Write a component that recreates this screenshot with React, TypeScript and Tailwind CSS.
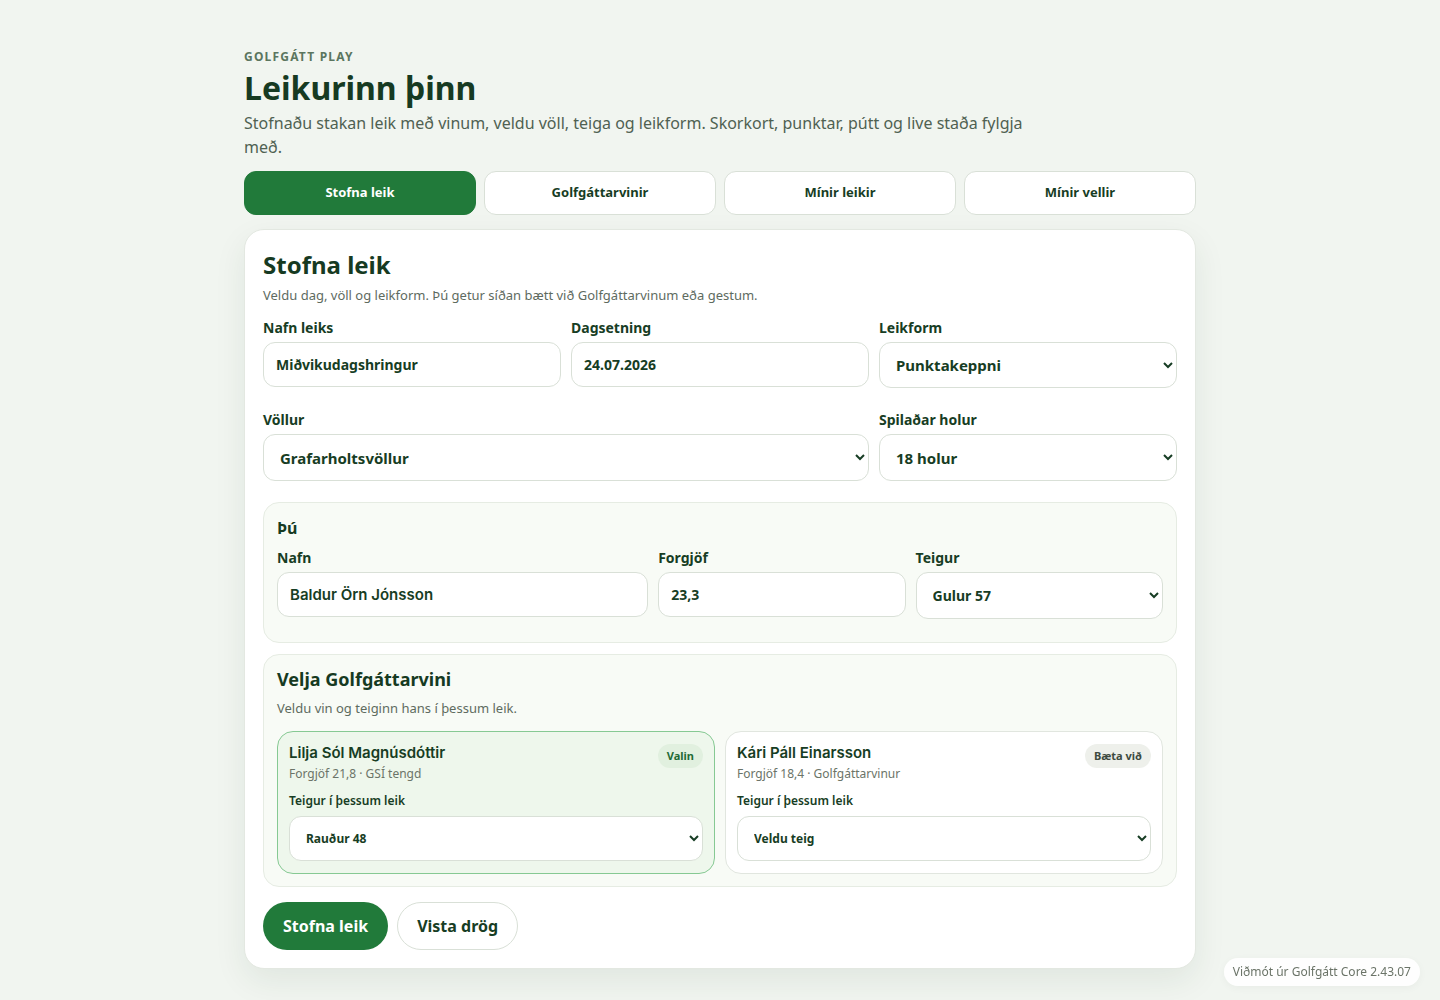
import React from "react";

const tabs = ["Stofna leik", "Golfgáttarvinir", "Mínir leikir", "Mínir vellir"];

function Label({ children }: { children: React.ReactNode }) {
  return <div className="mb-[4px] text-[14px] font-bold leading-[20px] text-[#173d24]">{children}</div>;
}

function TextInput({ value, inter }: { value: string; inter?: boolean }) {
  return (
    <input
      readOnly
      value={value}
      className={
        "h-[45px] w-full rounded-[12px] border border-[#d9e0d7] bg-white px-[12px] text-[#173d24] outline-none " +
        (inter ? "font-['Inter',sans-serif] text-[15px] font-semibold" : "font-['Noto_Sans',sans-serif] text-[14px] font-bold")
      }
    />
  );
}

function Select({ value, h = "h-[46px]", size = "text-[14px]" }: { value: string; h?: string; size?: string }) {
  return (
    <select
      defaultValue={value}
      className={`${h} ${size} w-full rounded-[12px] border border-[#d9e0d7] bg-white px-[12px] font-['Noto_Sans',sans-serif] font-bold text-[#173d24] outline-none`}
    >
      <option>{value}</option>
    </select>
  );
}

function FriendCard({
  name,
  sub,
  badge,
  tee,
  selected,
}: {
  name: string;
  sub: string;
  badge: string;
  tee: string;
  selected?: boolean;
}) {
  return (
    <div
      className={
        "rounded-[16px] border px-[11px] pb-[12px] pt-[10px] " +
        (selected ? "border-[#86c993] bg-[#eef7ec]" : "border-[#e1e6df] bg-white")
      }
    >
      <div className="flex items-start justify-between">
        <div>
          <div className="font-['Inter',sans-serif] text-[15px] font-semibold leading-[22px] text-[#173d24]">{name}</div>
          <div className="mt-[1px] text-[12px] leading-[18px] text-[#6b7468]">{sub}</div>
        </div>
        <span
          className={
            "mt-[2px] rounded-full px-[9px] py-[5px] text-[11px] font-bold leading-[14px] " +
            (selected ? "bg-[#e1f0df] text-[#1f6b35]" : "bg-[#eef0eb] text-[#3d4a3f]")
          }
        >
          {badge}
        </span>
      </div>
      <div className="mb-[6px] mt-[9px] text-[12px] font-semibold leading-[18px] text-[#173d24]">Teigur í þessum leik</div>
      <Select value={tee} h="h-[45px]" size="text-[12px]" />
    </div>
  );
}

export default function App() {
  return (
    <div className="min-h-[1000px] bg-[#f1f5f0] font-['Noto_Sans',sans-serif] text-[#173d24]">
      <div className="mx-auto w-[952px] pb-[32px] pt-[49px]">
        <div className="text-[12px] font-bold uppercase leading-[16px] tracking-[0.1em] text-[#5b755f]">Golfgátt play</div>
        <h1 className="mt-[2px] text-[32px] font-bold leading-[42px] text-[#163a22]">Leikurinn þinn</h1>
        <p className="mt-[2px] max-w-[790px] text-[16px] leading-[24px] text-[#4f6152]">
          Stofnaðu stakan leik með vinum, veldu völl, teiga og leikform. Skorkort, punktar, pútt og live staða fylgja með.
        </p>

        <div className="mt-[12px] grid grid-cols-4 gap-[8px]">
          {tabs.map((t, i) => (
            <button
              key={t}
              className={
                "h-[44px] rounded-[12px] border text-[13px] font-bold " +
                (i === 0 ? "border-[#217a3a] bg-[#217a3a] text-white" : "border-[#d9e0d7] bg-white text-[#173d24]")
              }
            >
              {t}
            </button>
          ))}
        </div>

        <div className="mt-[14px] rounded-[20px] border border-[#e3e8e1] bg-white px-[18px] pb-[18px] pt-[18px] shadow-[0_12px_32px_rgba(30,70,40,0.08)]">
          <h2 className="text-[24px] font-bold leading-[34px] text-[#163a22]">Stofna leik</h2>
          <p className="mt-[4px] text-[13px] leading-[18px] text-[#5e6b5f]">
            Veldu dag, völl og leikform. Þú getur síðan bætt við Golfgáttarvinum eða gestum.
          </p>

          <div className="mt-[14px] grid grid-cols-3 gap-x-[10px] gap-y-[22px]">
            <div>
              <Label>Nafn leiks</Label>
              <TextInput value="Miðvikudagshringur" />
            </div>
            <div>
              <Label>Dagsetning</Label>
              <TextInput value="24.07.2026" />
            </div>
            <div>
              <Label>Leikform</Label>
              <Select value="Punktakeppni" h="h-[46px]" size="text-[15px]" />
            </div>
            <div className="col-span-2">
              <Label>Völlur</Label>
              <Select value="Grafarholtsvöllur" h="h-[47px]" size="text-[15px]" />
            </div>
            <div>
              <Label>Spilaðar holur</Label>
              <Select value="18 holur" h="h-[47px]" size="text-[15px]" />
            </div>
          </div>

          <div className="mt-[21px] rounded-[16px] border border-[#e6ece3] bg-[#f8fbf6] px-[13px] pb-[23px] pt-[12px]">
            <div className="text-[16px] font-bold leading-[26px] text-[#163a22]">Þú</div>
            <div className="mt-[7px] grid grid-cols-[1.5fr_1fr_1fr] gap-[10px]">
              <div>
                <Label>Nafn</Label>
                <TextInput value="Baldur Örn Jónsson" inter />
              </div>
              <div>
                <Label>Forgjöf</Label>
                <TextInput value="23,3" />
              </div>
              <div>
                <Label>Teigur</Label>
                <Select value="Gulur 57" h="h-[47px]" size="text-[14px]" />
              </div>
            </div>
          </div>

          <div className="mt-[11px] rounded-[16px] border border-[#e6ece3] bg-[#f8fbf6] px-[13px] pb-[12px] pt-[11px]">
            <div className="text-[18px] font-bold leading-[26px] text-[#163a22]">Velja Golfgáttarvini</div>
            <p className="mt-[7px] text-[13px] leading-[18px] text-[#5e6b5f]">Veldu vin og teiginn hans í þessum leik.</p>
            <div className="mt-[14px] grid grid-cols-2 gap-[10px]">
              <FriendCard name="Lilja Sól Magnúsdóttir" sub="Forgjöf 21,8 · GSÍ tengd" badge="Valin" tee="Rauður 48" selected />
              <FriendCard name="Kári Páll Einarsson" sub="Forgjöf 18,4 · Golfgáttarvinur" badge="Bæta við" tee="Veldu teig" />
            </div>
          </div>

          <div className="mt-[15px] flex gap-[9px]">
            <button className="h-[48px] rounded-full bg-[#217a3a] px-[20px] text-[16px] font-bold text-white">Stofna leik</button>
            <button className="h-[48px] rounded-full border border-[#d9e0d7] bg-white px-[19px] text-[16px] font-bold text-[#173d24]">
              Vista drög
            </button>
          </div>
        </div>
      </div>

      <div className="fixed bottom-[14px] right-[20px] rounded-full bg-white/90 px-[9px] py-[5px] text-[12px] leading-[18px] text-[#6b7468] shadow-[0_2px_8px_rgba(0,0,0,0.04)]">
        Viðmót úr Golfgátt Core 2.43.07
      </div>
    </div>
  );
}
